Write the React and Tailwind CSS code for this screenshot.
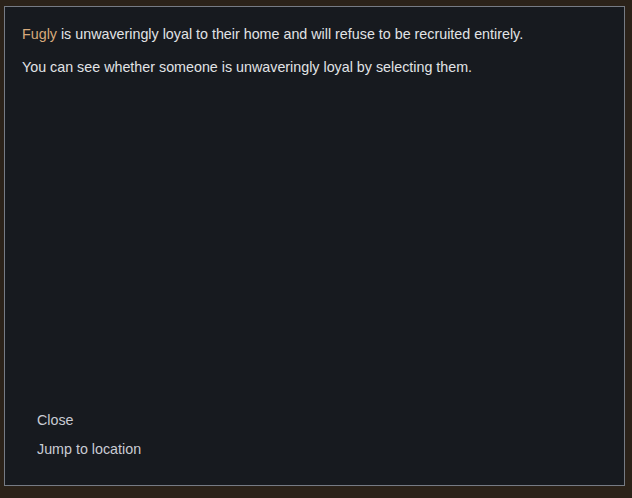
import React from "react";

export default function App() {
  return (
    <div className="w-[632px] h-[498px] bg-[#2b2219] overflow-hidden pt-[6px] pl-[4px]" style={{ fontFamily: '"Liberation Sans", Arial, sans-serif' }}>
      <div className="w-[621px] h-[480px] bg-[#171a1f] border border-[#767b84] flex flex-col justify-between px-[17px] pt-[18px] pb-[27px]">
        <div className="flex flex-col gap-[15px] text-[14.3px] leading-[18px] text-[#e1e3e6]">
          <p>
            <span className="text-[#d8aa7b]">Fugly</span> is unwaveringly loyal to their home and will refuse to be recruited entirely.
          </p>
          <p>You can see whether someone is unwaveringly loyal by selecting them.</p>
        </div>
        <div className="flex flex-col gap-[11px] pl-[15px] text-[14.3px] leading-[18px] text-[#c9ccd4]">
          <span>Close</span>
          <span>Jump to location</span>
        </div>
      </div>
    </div>
  );
}
